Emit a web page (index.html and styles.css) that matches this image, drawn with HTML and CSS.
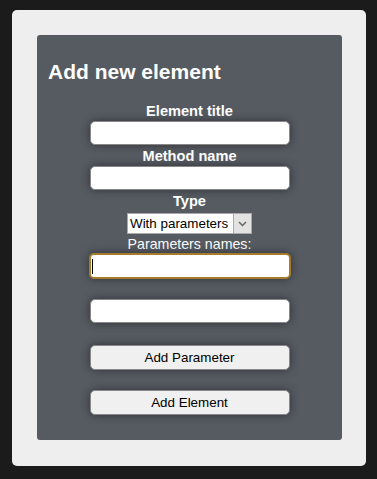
FILE: index.html
```html
<html>
  <head>
    <title>Add new element</title>
    <meta name="viewport" content="width=device-width, initial-scale=1" />
    <link rel="stylesheet" href="styles.css">
  </head>
  <body>
    <div class="wrapper">
      <div class="panel">
        <h2>Add new element</h2>
        <form class="form">
          <label class="label">Element title</label>
          <input class="field" type="text">
          <label class="label">Method name</label>
          <input class="field" type="text">
          <label class="label">Type</label>
          <div class="select">
            <span class="select-value">With parameters</span>
            <span class="select-arrow">
              <svg width="9" height="6" viewBox="0 0 9 6"><path d="M1 1 L4.5 4.5 L8 1" fill="none" stroke="#666" stroke-width="1.5"/></svg>
            </span>
          </div>
          <div class="params-label">Parameters names:</div>
          <input class="field focused" type="text">
          <input class="field spaced" type="text">
          <button type="button" class="btn">Add Parameter</button>
          <button type="button" class="btn">Add Element</button>
        </form>
      </div>
    </div>
  </body>
</html>
```

FILE: styles.css
```css
body {
  margin: 0;
  background: #1b1b1b;
  font-family: 'Liberation Sans', Arial, sans-serif;
}

.wrapper {
  margin: 10px 11px 14px 12px;
  background: #eeeeee;
  border-radius: 5px;
  padding: 25px 24px 26px 25px;
}

.panel {
  background: #565b62;
  border-radius: 3px;
  padding: 25px 11px 25px 11px;
  color: #fff;
}

.panel h2 {
  margin: 0 0 19px 0;
  font-size: 21px;
  line-height: 24px;
  font-weight: bold;
}

.form {
  display: flex;
  flex-direction: column;
  align-items: center;
  margin: 0;
}

.label {
  font-size: 14.6px;
  font-weight: bold;
  line-height: 17px;
  margin-bottom: 1px;
}

.field {
  width: 200px;
  height: 24px;
  box-sizing: border-box;
  border: 1px solid #888;
  border-radius: 5px;
  background: #fff;
  box-shadow: 0 0 10px rgba(0, 0, 0, 0.45);
  margin: 0 0 3px 0;
  padding: 0 4px;
  outline: none;
}

.field.focused {
  width: 202px;
  height: 26px;
  border: 2px solid #a57c2c;
  margin: 0;
  background: linear-gradient(#000, #000) no-repeat 1px 4px / 1px 15px, #fff;
}

.field.spaced {
  margin-top: 20px;
}

.select {
  display: flex;
  width: 125px;
  height: 21px;
  box-sizing: border-box;
  border: 1px solid #a9a9a9;
  background: #fff;
  margin-top: 2px;
  color: #000;
}

.select-value {
  flex: 1;
  font-size: 13.4px;
  line-height: 19px;
  padding-left: 2px;
  white-space: nowrap;
}

.select-arrow {
  width: 17px;
  display: flex;
  align-items: center;
  justify-content: center;
  background: #e3e3e3;
  border-left: 1px solid #a9a9a9;
}

.params-label {
  font-size: 14.2px;
  line-height: 17px;
  margin: 2px 0 0 0;
}

.btn {
  width: 200px;
  height: 25px;
  box-sizing: border-box;
  border: 1px solid #888;
  border-radius: 5px;
  background: #f0f0f0;
  box-shadow: 0 0 10px rgba(0, 0, 0, 0.45);
  font-family: 'Liberation Sans', Arial, sans-serif;
  font-size: 13.4px;
  color: #000;
  margin-top: 19px;
  padding: 0;
}

.btn + .btn {
  margin-top: 20px;
}
```
